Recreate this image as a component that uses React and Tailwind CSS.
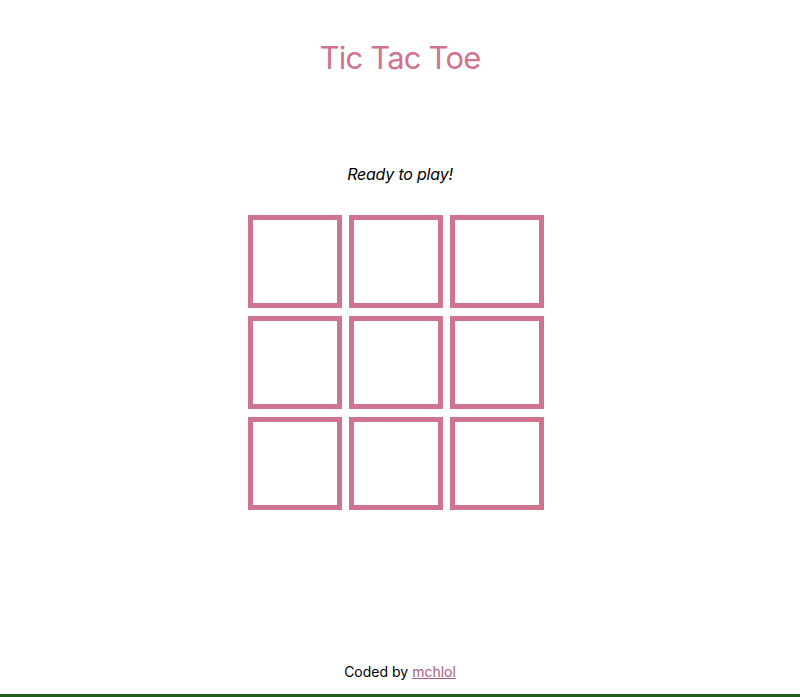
import React from "react";

const cells = Array.from({ length: 9 });

export default function App() {
  return (
    <div className="min-h-[697px] flex flex-col items-center bg-white border-b-[3px] border-[#1f5e1f] font-['Inter',sans-serif]">
      <h1 className="mt-[38px] text-[31px] leading-[40px] text-[#d0738f] tracking-[-0.8px]">
        Tic Tac Toe
      </h1>

      <p className="mt-[84px] text-[16px] leading-[24px] italic text-black tracking-[-0.2px]">
        Ready to play!
      </p>

      <div className="mt-[29px] mr-[9px] grid grid-cols-[repeat(3,94px)] grid-rows-[repeat(3,93px)] gap-x-[7px] gap-y-[8px]">
        {cells.map((_, i) => (
          <button key={i} className="border-[5px] border-[#d0738f] bg-white" />
        ))}
      </div>

      <footer className="mt-auto mb-[12px] text-[14px] text-black">
        Coded by{" "}
        <a href="#" className="text-[#a8607d] underline">
          mchlol
        </a>
      </footer>
    </div>
  );
}
